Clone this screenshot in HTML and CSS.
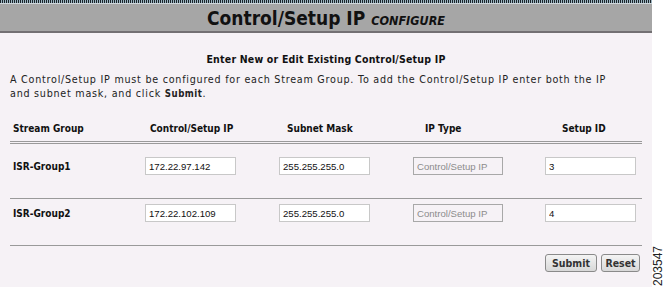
FILE: index.html
```html
<!DOCTYPE html>
<html lang="en">
<head>
    <meta charset="UTF-8">
    <title>Control/Setup IP</title>
    <link rel="stylesheet" href="styles.css">
</head>
<body>

    <div class="page">
        <!-- Main panel -->
        <div class="panel">
            <div class="stripes"></div>
            <div class="title-bar">
                <h1>Control/Setup IP <span class="sub">CONFIGURE</span></h1>
            </div>

            <div class="content">
                <h2>Enter New or Edit Existing Control/Setup IP</h2>
                <p class="intro">A Control/Setup IP must be configured for each Stream Group. To add the Control/Setup IP enter both the IP<br>and subnet mask, and click <b>Submit</b>.</p>

                <div class="grid head">
                    <div class="c1">Stream Group</div>
                    <div class="c2">Control/Setup IP</div>
                    <div class="c3">Subnet Mask</div>
                    <div class="c4">IP Type</div>
                    <div class="c5">Setup ID</div>
                </div>

                <div class="grid row first">
                    <div class="name">ISR-Group1</div>
                    <input class="field" type="text" value="172.22.97.142">
                    <input class="field" type="text" value="255.255.255.0">
                    <input class="field" type="text" placeholder="Control/Setup IP" disabled>
                    <input class="field" type="text" value="3">
                </div>

                <div class="grid row">
                    <div class="name">ISR-Group2</div>
                    <input class="field" type="text" value="172.22.102.109">
                    <input class="field" type="text" value="255.255.255.0">
                    <input class="field" type="text" placeholder="Control/Setup IP" disabled>
                    <input class="field" type="text" value="4">
                </div>

                <div class="actions">
                    <button class="button submit">Submit</button>
                    <button class="button reset">Reset</button>
                </div>
            </div>
        </div>

        <!-- Figure number -->
        <div class="side">
            <span class="fig">203547</span>
        </div>
    </div>

</body>
</html>
```

FILE: styles.css
```css
* {
    margin: 0;
    padding: 0;
    box-sizing: border-box;
}

body {
    background-color: white;
    font-family: 'DejaVu Sans', Verdana, sans-serif;
    color: #111;
    width: 664px;
    height: 287px;
    overflow: hidden;
}

.page {
    display: flex;
    height: 287px;
}

.panel {
    width: 652px;
    background-color: #f6f2f6;
}

.stripes {
    height: 4px;
    background: repeating-linear-gradient(90deg, #1b2329 0 1px, #9db6c2 1px 2px);
    border-bottom: 1px solid #cfd6da;
}

.title-bar {
    height: 29px;
    background-color: #a6a6a6;
    border-bottom: 2px solid #737073;
    display: flex;
    justify-content: center;
    align-items: center;
}

.title-bar h1 {
    font-family: 'DejaVu Sans Condensed', 'DejaVu Sans', sans-serif;
    font-size: 19px;
    font-weight: bold;
    color: #111;
    padding-top: 1px;
}

.title-bar .sub {
    font-size: 12.5px;
    font-style: italic;
}

.content {
    padding: 0 10px;
}

.content h2 {
    font-family: 'DejaVu Sans Condensed', 'DejaVu Sans', sans-serif;
    font-size: 10.5px;
    font-weight: bold;
    letter-spacing: 0.2px;
    text-align: center;
    margin-top: 19px;
    height: 14px;
    line-height: 14px;
}

.intro {
    font-size: 9.6px;
    letter-spacing: 0.75px;
    line-height: 14px;
    margin-top: 7px;
    color: #222;
    white-space: nowrap;
}

.intro b {
    font-family: 'DejaVu Sans Condensed', 'DejaVu Sans', sans-serif;
    letter-spacing: 0.5px;
}

.grid {
    display: grid;
    grid-template-columns: 135px 134px 134px 132px 97px;
    align-items: center;
}

.head {
    margin-top: 20px;
    height: 23px;
    padding-bottom: 6px;
    border-bottom: 3px double #9a9a9a;
    font-family: 'DejaVu Sans Condensed', 'DejaVu Sans', sans-serif;
    font-size: 10px;
    font-weight: bold;
}

.head .c1 { padding-left: 3px; }
.head .c2 { padding-left: 5px; }
.head .c3 { padding-left: 8px; }
.head .c4 { padding-left: 12px; }
.head .c5 { padding-left: 17px; }

.row {
    padding: 5px 0 23px;
    border-bottom: 1px solid #9a9a9a;
}

.row.first {
    padding-top: 13px;
}

.name {
    font-family: 'DejaVu Sans Condensed', 'DejaVu Sans', sans-serif;
    font-size: 10px;
    font-weight: bold;
    padding-left: 3px;
}

.field {
    width: 91px;
    height: 18px;
    border: 1px solid #c8c8c8;
    background-color: white;
    font-family: 'Liberation Sans', Arial, sans-serif;
    font-size: 9.6px;
    color: #111;
    padding: 0 3px;
    outline: none;
}

.field:disabled {
    width: 90px;
    border-color: #a8a8a8;
    background-color: #f6f2f6;
}

.field::placeholder {
    color: #8c8c8c;
}

.actions {
    display: flex;
    justify-content: flex-end;
    gap: 4px;
    margin-top: 8px;
    padding-right: 2px;
}

.button {
    height: 18px;
    padding: 0;
    font-family: 'DejaVu Sans Condensed', 'DejaVu Sans', sans-serif;
    font-size: 10.5px;
    font-weight: bold;
    color: #333;
    background: linear-gradient(#f4f4f4, #d8d8d8);
    border: 1px solid #8a8a8a;
    border-radius: 3px;
    cursor: pointer;
}

.button.submit {
    width: 52px;
}

.button.reset {
    width: 39px;
}

.side {
    flex: 1;
    display: flex;
    flex-direction: column;
    justify-content: flex-end;
    align-items: center;
}

.fig {
    writing-mode: vertical-rl;
    transform: rotate(180deg);
    font-family: 'Liberation Sans', Arial, sans-serif;
    font-size: 12px;
    line-height: 11px;
    color: #222;
    margin-bottom: 1px;
}
```
